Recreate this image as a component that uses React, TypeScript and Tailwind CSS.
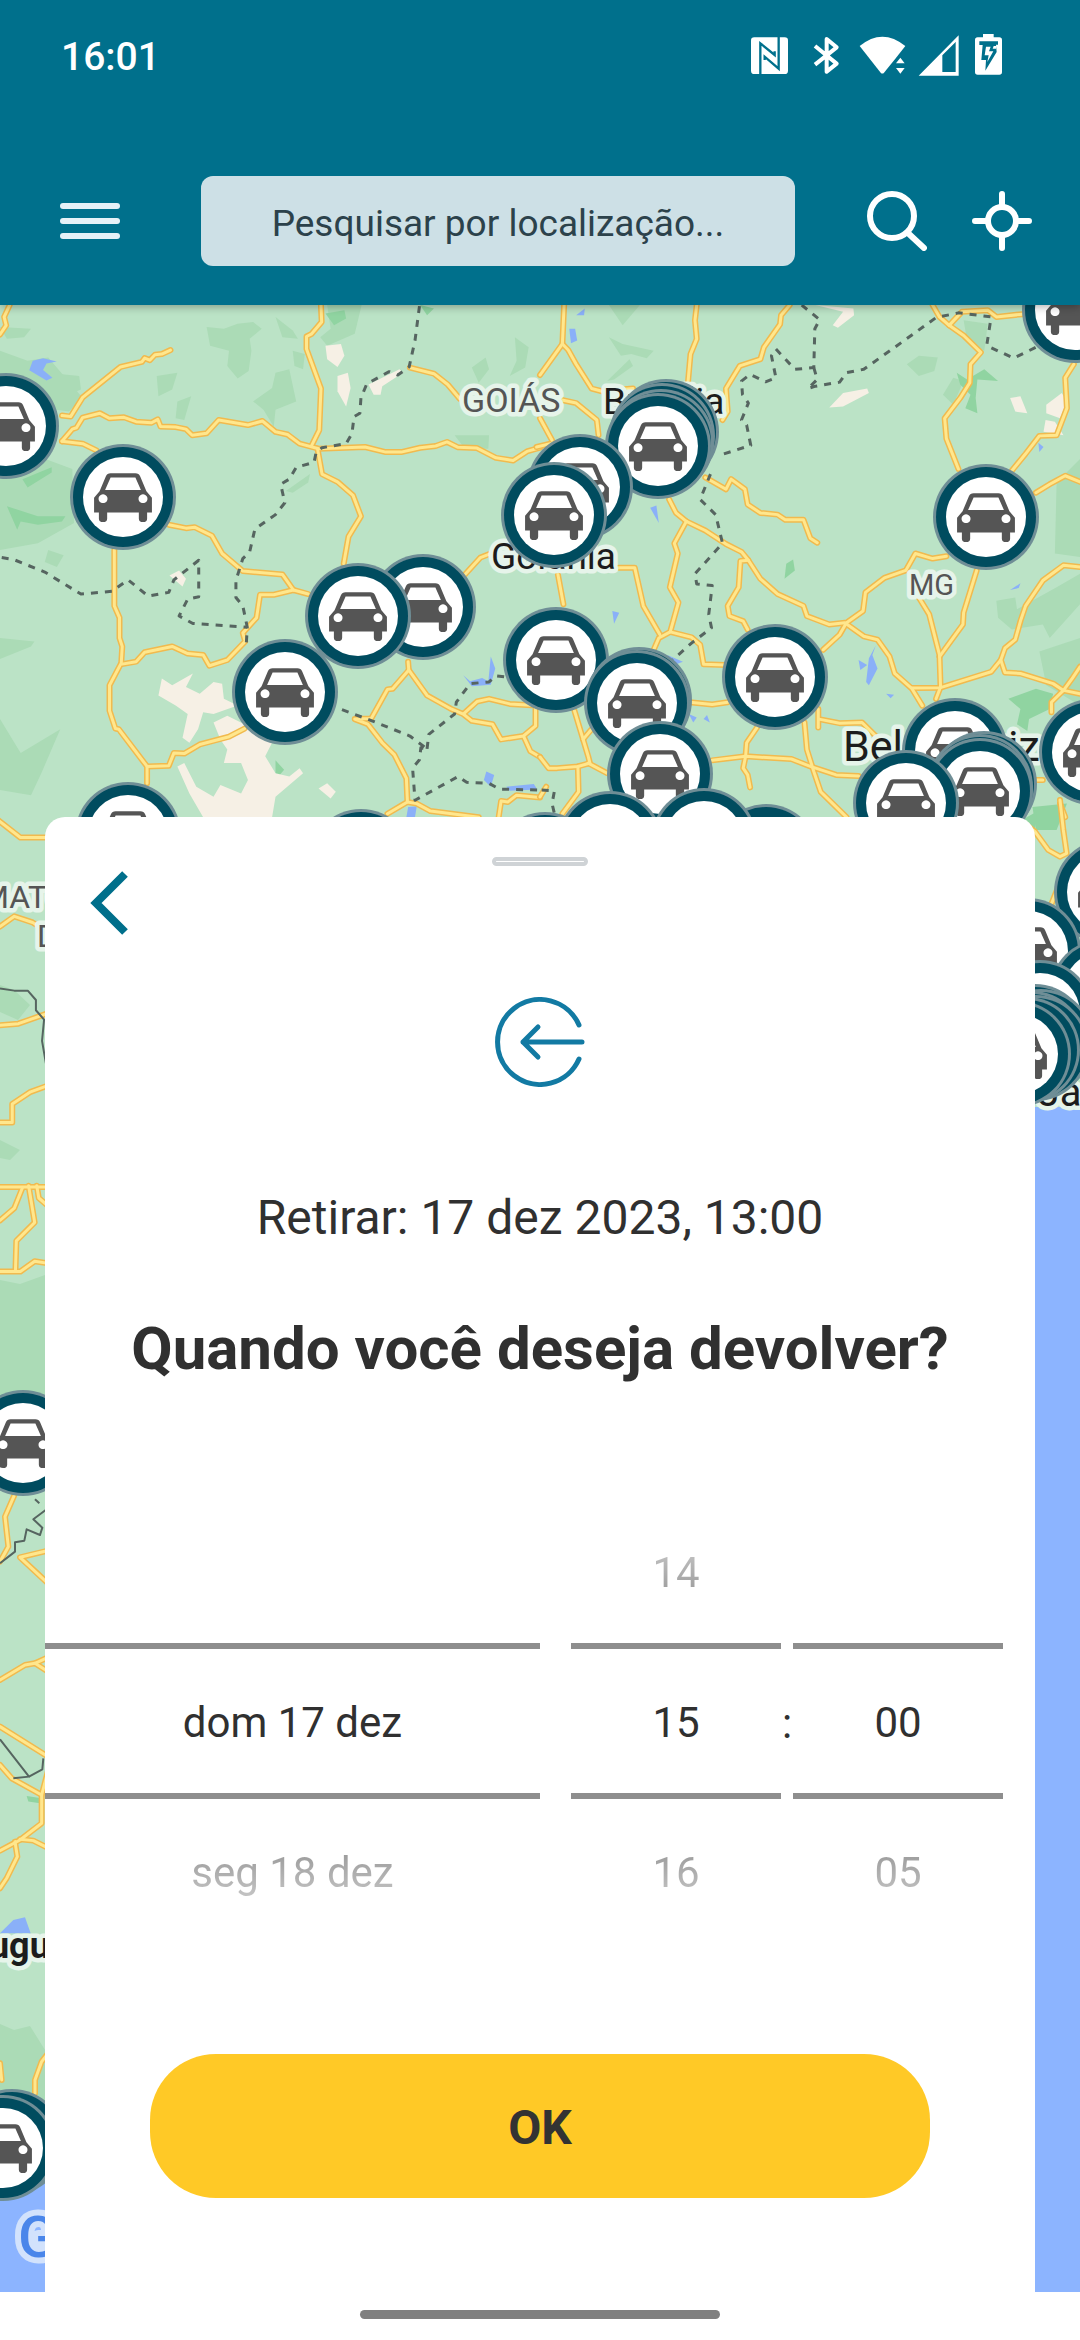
import React from "react";

type Line = string;

interface Region {
  transform: string;
  roads: Line[];
  borders: Line[];
  solid?: boolean;
}

const WEST = "translate(0 300) scale(0.3444 0.338)";
const EAST = "translate(540 300) scale(0.3444 0.338)";

/* Each region of the map keeps its own drawing scale. */
const REGIONS: Region[] = [
  {
    transform: WEST,
    roads: [
      "28,15 12,50 18,75 0,102",
      "180,342 205,345 240,288 350,198 412,183 420,172 435,178 450,162 470,160 495,148",
      "180,418 210,382 222,378 240,348 290,335 318,350 360,347 395,360 440,363 458,353 466,374 510,376 540,382 558,400 600,394 635,355 720,370 762,358 800,390 835,398 870,425 925,440 1060,435 1120,450 1165,450 1220,437 1265,432 1298,420 1330,436 1385,438 1440,467 1490,475 1530,448 1568,437",
      "180,418 240,425 280,445",
      "932,15 934,65 905,100 890,108 890,145 932,262 927,385 905,430",
      "922,440 935,515 980,538 1025,578 1048,640 1012,700 998,780",
      "490,665 540,675 565,672 615,697 645,750 705,802 820,812 852,858",
      "895,870 852,858 795,872 755,872 745,940 705,985 712,1010 660,1065 608,1082 590,1050 545,1046 500,1025 420,1042 395,1070 350,1078 318,1140 318,1215 335,1268 345,1270 427,1380 427,1430",
      "332,740 332,905 347,940 347,1000 355,1025 352,1075",
      "427,1380 490,1378 505,1340 535,1342 580,1315 665,1292 710,1268",
      "1190,200 1260,218 1300,250 1335,292",
      "1350,812 1395,762 1430,748",
      "1185,1070 1187,1095 1140,1150 1125,1152 1078,1238 1030,1240 1068,1255 1110,1310 1145,1345 1180,1415 1183,1485 1125,1520",
      "1187,1095 1240,1170 1310,1210 1345,1225 1385,1188 1420,1180 1480,1195 1555,1200 1555,1260 1520,1290 1455,1300 1430,1255 1370,1245 1345,1225",
      "1520,1290 1540,1335 1568,1352",
      "1183,1485 1210,1490 1250,1512 1390,1530",
      "1448,1530 1455,1482 1475,1485 1500,1465 1568,1472",
    ],
    borders: [
      "1218,18 1205,120 1188,198 1155,222 1130,212 1065,248 1048,290 1045,335 1028,345 1022,395 1005,425 935,437 918,450 912,480 860,495 840,530 815,545 827,600 800,635 740,678 725,745 705,765 685,830 685,880 705,905 718,968 715,1020",
      "5,762 40,768 130,805 235,870 325,862 372,828 430,876 490,865 505,828 577,770 577,878 545,885 520,935 560,957 718,968",
      "993,1212 1080,1245 1190,1290 1240,1328 1222,1325 1218,1360 1198,1385 1205,1480 1330,1410 1355,1427 1420,1430 1450,1447 1568,1450",
      "1240,1328 1245,1285 1320,1225 1325,1190 1365,1135 1420,1130 1440,1112 1465,1115",
    ],
  },
  {
    transform: EAST,
    roads: [
      "70,15 65,130 0,222",
      "65,130 82,148 105,190 150,262 180,270 270,262",
      "455,15 450,60 455,115 437,160 430,240",
      "725,15 700,45 697,72 650,140 640,175 580,195 540,262 545,330 530,355",
      "60,295 105,305 165,355 170,400",
      "0,350 35,415",
      "-10,435 30,425",
      "480,525 540,560 555,530 595,560 603,605 640,630 690,635 712,650 765,650 785,705 805,718",
      "375,590 395,630 425,655 480,682 540,722 585,745 605,770 640,825 690,870 765,905 775,935 840,960 885,955 940,995 980,1005 1015,1055 1030,1105 1080,1150 1110,1200",
      "425,655 390,720 400,750 377,850 402,895 378,982 345,1000 330,1035",
      "228,792 275,792 300,905 348,990",
      "378,982 440,998 465,1020 475,1078 540,1080",
      "605,770 582,772 577,850 545,905 550,935 590,950 603,975",
      "52,812 68,900",
      "1180,758 1140,765 1090,750 1062,800 1000,822 945,865 938,920 890,955 870,990 822,1035",
      "1100,880 1130,930 1160,1050 1163,1145 1150,1180",
      "1268,800 1230,925 1228,960 1160,1055",
      "1080,1148 1163,1147 1310,1100 1338,1065 1350,1030 1380,1005 1395,950 1410,905 1460,830 1520,785 1568,790",
      "1338,1065 1350,1102 1395,1105 1490,1135 1520,1155 1568,1165",
      "1520,1155 1545,1120 1568,1085",
      "1520,1155 1485,1190 1485,1220",
      "1140,15 1160,50 1188,75 1230,105 1280,155 1250,190 1248,245 1220,290 1175,350 1180,410 1215,500",
      "1188,75 1225,35 1300,30 1325,50 1400,42",
      "1550,190 1525,230 1530,320 1500,400 1450,402 1410,455 1370,505",
      "1440,570 1480,545 1525,520 1568,538",
      "100,1215 140,1350 145,1370 110,1380 50,1385 25,1385 0,1352",
      "140,1370 195,1400",
      "125,1300 148,1272",
      "110,1380 112,1455 65,1520",
      "0,1470 18,1440",
      "435,1190 500,1197 545,1190",
      "630,1265 600,1310 597,1350 590,1385 603,1405 610,1442",
      "500,1362 597,1350 730,1358 785,1380 860,1405 925,1408",
      "768,1250 775,1330 795,1395 815,1455 890,1530",
      "808,1210 808,1265",
      "810,1240 870,1252 935,1250 975,1290",
      "1430,1420 1460,1420",
      "1510,1490 1525,1530",
    ],
    borders: [
      "760,15 812,58 798,85 795,200 740,205 685,145 672,165 685,230 655,242 610,220 585,240 588,280 605,305 585,355 600,370 612,430 525,458",
      "795,200 805,235 778,262 800,255 870,243 890,215 940,205 1030,140 1150,52 1215,38 1310,50 1297,135 1375,172 1440,140",
      "495,515 465,590 510,635 530,720 450,810 455,840 500,845 490,930 498,970 440,1015 385,1065",
      "5,1450 42,1452 35,1490 42,1520",
    ],
  },
  {
    transform: "translate(0 800) scale(0.4082)",
    roads: [
      "-10,45 50,92 130,92",
      "0,310 35,285 80,300 120,325",
      "0,552 45,548 130,518",
      "0,790 30,790 30,745 75,715 130,695",
      "0,948 130,948",
      "55,950 35,1000 0,1030",
      "70,945 85,1035 40,1080 38,1150",
      "90,945 95,975 130,1005",
      "0,1155 50,1155 85,1130 130,1137",
    ],
    borders: ["0,462 35,467 68,467 88,490 88,515 108,538 103,590 115,660"],
    solid: true,
  },
  {
    transform: "translate(980 800) scale(0.3333)",
    roads: ["240,0 250,90 260,160 240,170 205,150 165,95 120,60", "215,310 235,260"],
    borders: [],
  },
  {
    transform: "translate(0 1380) scale(0.3333)",
    roads: [
      "42,348 15,410 25,500 0,545",
      "160,508 60,532 160,625",
      "0,900 75,855 105,850 160,825",
      "105,850 160,885",
      "0,1040 160,1140",
      "0,1155 35,1195 125,1245 125,1330 60,1380 0,1412",
      "125,1245 150,1150",
      "45,1385 52,1430 20,1495 0,1525",
      "60,1378 100,1382 160,1412",
      "0,2050 5,2100",
      "160,2000 125,2045 105,2100 105,2140",
    ],
    borders: [
      "0,550 45,515 45,487 73,482 80,448 120,465 127,443 100,418 140,388",
      "105,358 118,370",
      "0,1078 87,1190 40,1195",
      "87,1190 127,1168 130,1135",
    ],
    solid: true,
  },
];

const GREEN_WEST = [
  "600,80 650,85 690,70 735,65 760,85 725,115 730,150 722,210 690,232 660,195 665,150 610,135",
  "735,300 790,260 800,215 840,205 860,300 800,325 795,375 765,325",
  "800,50 850,90 865,115 820,110",
  "950,15 1050,15 1030,100 950,135 930,110 960,85",
  "455,225 515,215 500,265 460,285",
  "515,300 555,285 535,355 510,350",
  "180,220 230,225 235,265 200,280",
  "0,150 80,180 140,170 240,290 200,330 0,300",
  "0,530 130,470 210,500 215,660 110,720 0,740",
  "0,1000 100,1010 90,1025 0,1062",
  "0,1240 60,1340 175,1270 120,1400 90,1465 0,1450",
  "1480,225 1500,180 1495,110 1535,140 1525,200",
  "1370,200 1410,170 1420,205 1390,245",
  "1320,400 1420,400 1418,440 1350,440",
  "830,565 900,515 895,540 850,570",
  "850,150 885,160 880,205 855,195",
  "0,80 90,85 70,110 20,115",
  "140,740 185,755 165,790 130,775",
];

const GREEN_EAST = [
  "200,110 240,130 330,150 310,172 265,160 235,165",
  "195,240 260,175 270,195 215,235",
  "200,15 290,15 240,75",
  "1065,190 1100,165 1155,170 1145,210 1100,225",
  "1500,540 1568,470 1568,760 1495,750",
  "1325,890 1380,880 1385,915 1500,850 1568,810 1568,900 1480,1000 1460,960 1370,975 1330,940",
  "1230,60 1300,70 1290,150 1240,120",
  "1170,280 1200,230 1230,240 1200,310",
  "1450,1040 1568,1000 1568,1200 1470,1140",
];

interface Patch {
  at: string;
  shapes: string[];
}

const FOREST: Patch[] = [
  {
    at: WEST,
    shapes: [
      "945,40 1000,30 1005,55 970,75",
      "1220,15 1260,25 1240,45",
      "20,610 110,640 190,640 180,655 110,665 60,655 50,680",
      "65,530 150,495 150,510 80,555",
      "800,1362 825,1390 800,1420",
      "725,1430 745,1410 740,1455 720,1455",
    ],
  },
  {
    at: EAST,
    shapes: [
      "710,825 715,780 735,768 740,800",
      "1210,215 1240,235 1290,205 1330,240 1270,235 1265,290 1270,335 1235,320 1250,280 1220,250",
      "1360,1180 1440,1150 1490,1165 1480,1210 1420,1240 1415,1275 1385,1255 1395,1210",
      "1430,1500 1530,1490 1500,1568 1440,1568",
    ],
  },
  { at: "translate(980 800) scale(0.3333)", shapes: ["125,60 170,35 165,90 130,85"] },
  { at: "translate(0 1380) scale(0.3333)", shapes: ["80,1248 125,1255 120,1270 85,1265"] },
];

const SAND: Patch[] = [
  {
    at: WEST,
    shapes: [
      "470,1120 500,1140 560,1105 540,1145 580,1165 620,1130 645,1135 650,1180 690,1200 620,1225 590,1220 575,1270 550,1310 530,1295 545,1225 510,1200 460,1170",
      "620,1250 660,1230 720,1260 790,1310 770,1350 800,1400 840,1410 870,1385 880,1400 800,1470 790,1530 590,1530 550,1460 515,1380 535,1370 570,1440 620,1470 640,1435 700,1460 720,1420 700,1370 650,1370 660,1330 640,1300",
      "945,135 990,130 1000,165 980,198 950,175",
      "980,225 1010,215 1018,260 1005,315 980,270",
      "1070,250 1160,205 1170,215 1110,255 1105,280 1085,280",
      "492,815 520,800 540,825 530,848",
      "925,1445 950,1430 975,1455 960,1475",
    ],
  },
  {
    at: EAST,
    shapes: [
      "840,318 880,275 950,262 955,275 880,315",
      "800,15 910,25 912,45 865,82 850,75 880,35",
      "1365,290 1395,285 1415,335 1380,330",
      "1470,310 1515,275 1530,300 1510,350 1470,335",
      "1468,355 1495,360 1520,400 1462,390",
    ],
  },
];

const WATER: Patch[] = [
  {
    at: WEST,
    shapes: [
      "85,208 95,180 125,172 165,182 135,188 125,207 152,230 135,238",
      "1345,1110 1365,1128 1400,1118 1418,1128 1425,1055 1438,1090 1425,1138 1370,1143",
      "1412,1395 1435,1405 1425,1440 1405,1420",
      "1470,1440 1550,1432 1560,1448 1480,1452",
      "1185,1500 1210,1498 1205,1530 1180,1530",
    ],
  },
  {
    at: EAST,
    shapes: [
      "85,85 102,85 108,120 90,128",
      "105,45 130,25 128,45",
      "320,615 338,608 345,660",
      "210,920 230,925 215,958",
      "925,1065 950,1080 930,1095",
      "955,1060 975,1022 965,1050 980,1090 955,1140 947,1130",
      "1005,1165 1028,1168 1018,1178",
      "1365,858 1395,838 1390,852",
      "432,1225 455,1235 445,1250",
      "475,1240 485,1228 493,1250",
      "370,1050 415,1070 390,1080",
      "1447,422 1462,435 1450,450",
    ],
  },
  { at: "translate(0 1840) scale(0.3333)", shapes: ["0,280 40,240 75,232 92,280"] },
];

const PINS: [number, number][] = [
  [6, 426], [123, 497], [423, 607], [358, 616], [285, 692], [128, 835], [361, 862], [545, 865],
  [666, 432], [662, 436], [661, 442], [658, 446], [580, 487], [554, 515], [1075, 310], [986, 517],
  [556, 660], [639, 700], [637, 703], [775, 677], [660, 774], [766, 857], [610, 844], [704, 841],
  [955, 751], [984, 784], [980, 787], [980, 791], [906, 803], [1092, 752],
  [1107, 892], [1028, 951], [1103, 992], [1040, 1013],
  [1035, 1037], [1041, 1042], [1032, 1044], [1036, 1048], [1027, 1050], [1018, 1054],
  [23, 1443], [12, 2142], [3, 2148],
];

function Patches({ patches, className }: { patches: Patch[]; className: string }) {
  return (
    <g className={className}>
      {patches.map(({ at, shapes }) => (
        <g key={at} transform={at}>
          {shapes.map((points) => (
            <polygon key={points} points={points} />
          ))}
        </g>
      ))}
    </g>
  );
}

function CarPin({ x, y }: { x: number; y: number }) {
  return (
    <g transform={`translate(${x} ${y})`}>
      <circle r="53" fill="#6f8e96" />
      <circle r="50" fill="#004c5f" />
      <circle r="40" fill="#fff" />
      <path
        transform="scale(0.3444 0.338)"
        fill="#555"
        fillRule="evenodd"
        d="M-36-70H36Q46-70 50-61L68-17 84 2V46H70V64Q70 74 58 74 46 74 46 64V46H-46V64Q-46 74-58 74-70 74-70 64V46H-84V2L-68-17-50-61Q-46-70-36-70ZM-36-58L-52-21H52L36-58ZM-58-8a13 13 0 1 0 .1 0ZM58-8a13 13 0 1 0 .1 0Z"
      />
    </g>
  );
}

function MapCanvas() {
  return (
    <svg
      aria-label="Mapa"
      viewBox="0 305 1080 1987"
      preserveAspectRatio="xMidYMin slice"
      className="absolute inset-0 h-full w-full font-[Roboto,sans-serif]"
    >
      <rect y="305" width="1080" height="1987" fill="#bbe3c6" />
      <g fill="#abdbb6">
        <g transform={WEST}>
          {GREEN_WEST.map((p) => (
            <polygon key={p} points={p} />
          ))}
        </g>
        <g transform={EAST}>
          {GREEN_EAST.map((p) => (
            <polygon key={p} points={p} />
          ))}
        </g>
        <path d="M0 985L14 990 30 1005 18 1020 0 1012ZM0 1140L20 1150 10 1160 0 1158ZM0 1280L20 1284 45 1275V1420H0ZM0 2024L14 2030 30 2026 45 2050V2160H0Z" />
      </g>
      <Patches patches={FOREST} className="fill-[#90d4a1]" />
      <Patches patches={SAND} className="fill-[#f6f0e5]" />
      <Patches patches={WATER} className="fill-[#8ab0f8]" />
      <rect x="1000" y="1107" width="80" height="1185" fill="#8cb4ff" />
      <path d="M0 2180H80V2292H0Z" fill="#8cb4ff" />

      {REGIONS.map((r) => (
        <g key={r.transform} transform={r.transform} fill="none" strokeLinejoin="round" strokeLinecap="round">
          {r.roads.map((p) => (
            <polyline key={p} points={p} stroke="#f1ba4e" strokeWidth="6" vectorEffect="non-scaling-stroke" />
          ))}
          {r.roads.map((p) => (
            <polyline key={p} points={p} stroke="#ffe78d" strokeWidth="3" vectorEffect="non-scaling-stroke" />
          ))}
          {r.borders.map((p) => (
            <polyline
              key={p}
              points={p}
              stroke="#566560"
              strokeWidth={r.solid ? 2 : 3}
              strokeLinecap="butt"
              strokeDasharray={r.solid ? undefined : "7 7"}
              vectorEffect="non-scaling-stroke"
            />
          ))}
        </g>
      ))}

      <g stroke="#e6f4ea" strokeWidth="9" strokeLinejoin="round" className="[paint-order:stroke]">
        <g fill="#555">
          <text x="462" y="412" fontSize="34">GOIÁS</text>
          <text x="909" y="595" fontSize="29">MG</text>
          <text x="-19" y="908" fontSize="32">MATO</text>
          <text x="37" y="947" fontSize="32">DO SUL</text>
        </g>
        <g fill="#1c1c1c">
          <text x="603" y="414" fontSize="37">Brasília</text>
          <text x="491" y="569" fontSize="37">Goiânia</text>
          <text x="843" y="761" fontSize="43">Belo Horizonte</text>
          <text x="917" y="1106" fontSize="40">Rio de Janeiro</text>
          <text x="-48" y="1958" fontSize="36" fontWeight="700">Uruguai</text>
        </g>
      </g>

      {PINS.map(([x, y]) => (
        <CarPin key={`${x}-${y}`} x={x} y={y} />
      ))}
      <text
        x="18"
        y="2257"
        fontSize="58"
        fontWeight="500"
        fill="#4a86ea"
        stroke="#d2e2fc"
        strokeWidth="12"
        strokeLinejoin="round"
        className="[paint-order:stroke]"
      >
        Google
      </text>
    </svg>
  );
}

function StatusIcons() {
  return (
    <div className="flex h-[42px] text-white" aria-hidden="true">
      <svg viewBox="33 42 150 126" className="h-full w-[50px]">
        <rect x="33" y="52" width="111" height="110" rx="10" fill="currentColor" />
        <path
          d="M61 164V70L104 105V94M116 50V146L74 110V120"
          fill="none"
          stroke="#00708c"
          strokeWidth="7"
        />
      </svg>
      <svg viewBox="183 42 150 126" className="h-full w-[50px]">
        <path
          d="M225 78L290 131 260 155V57L290 82 225 134"
          fill="none"
          stroke="currentColor"
          strokeWidth="12"
          strokeLinejoin="round"
        />
      </svg>
      <svg viewBox="333 42 180 126" className="h-full w-[60px]" fill="currentColor">
        <path d="M359 78Q427 22 496 78L466 116 432 158Q427 163 422 158Z" />
        <path d="M481 113L494 130H468ZM481 161L494 144H468Z" />
      </svg>
      <svg viewBox="513 42 165 126" className="h-full w-[55px]">
        <path fillRule="evenodd" fill="currentColor" d="M656 46V167H536ZM647 66L607 106V156H647Z" />
      </svg>
      <svg viewBox="678 42 108 126" className="h-full w-9">
        <path
          fill="currentColor"
          d="M729 42H761V52H778Q786 52 786 60V156Q786 164 778 164H713Q705 164 705 156V60Q705 52 713 52H729Z"
        />
        <path d="M718 64H774V74H768L770 96 736 152 738 120H724L728 75H718Z" fill="#00708c" />
        <path d="M738 80H752L747 94H760L742 126 746 106H734Z" fill="currentColor" />
        <path d="M761 78L758 86H768L770 78Z" fill="currentColor" />
      </svg>
    </div>
  );
}

function Header() {
  return (
    <header className="relative z-10 bg-[#00708c] pb-[39px] shadow-[0_2px_8px_rgba(0,0,0,0.3)]">
      <div className="flex h-44 items-start justify-between pt-[34px] pr-[78px] pl-[61px]">
        <span className="text-[39px] leading-[46px] font-medium text-white">16:01</span>
        <StatusIcons />
      </div>
      <div className="flex items-center pr-[48px] pl-[60px]">
        <button type="button" aria-label="Menu" className="flex w-[60px] shrink-0 flex-col gap-[9px]">
          <span className="h-[6px] rounded-full bg-[#e6f1f7]" />
          <span className="h-[6px] rounded-full bg-[#e6f1f7]" />
          <span className="h-[6px] rounded-full bg-[#e6f1f7]" />
        </button>
        <input
          type="text"
          aria-label="Pesquisar por localização"
          placeholder="Pesquisar por localização..."
          className="mr-[72px] ml-[81px] h-[90px] min-w-0 flex-1 rounded-xl bg-[#cde0e6] pt-1 text-center text-[37px] text-[#2c424b] outline-none placeholder:text-[#2c424b]"
        />
        <button type="button" aria-label="Buscar" className="mr-[45px] shrink-0 text-white">
          <svg viewBox="0 0 60 60" className="h-[60px] w-[60px]" fill="none" stroke="currentColor" strokeWidth="6">
            <circle cx="25" cy="25" r="22" />
            <path d="M42 43L57 57" strokeLinecap="round" />
          </svg>
        </button>
        <button type="button" aria-label="Minha localização" className="shrink-0 text-white">
          <svg
            viewBox="0 0 60 60"
            className="h-[60px] w-[60px]"
            fill="none"
            stroke="currentColor"
            strokeWidth="6"
            strokeLinecap="round"
          >
            <circle cx="30" cy="30" r="14" />
            <path d="M30 3V15M30 45V57M3 30H15M45 30H57" />
          </svg>
        </button>
      </div>
    </header>
  );
}

function Wheel({
  label,
  previous,
  current,
  next,
  className,
}: {
  label: string;
  previous?: string;
  current: string;
  next: string;
  className: string;
}) {
  return (
    <div role="group" aria-label={label} className={`flex flex-col text-[42px] leading-[48px] ${className}`}>
      <div className="flex h-36 items-center justify-center pt-1">
        {previous && (
          <button type="button" className="bg-linear-to-b from-[#c4c4c4] to-[#999] bg-clip-text text-transparent">
            {previous}
          </button>
        )}
      </div>
      <div className="flex h-[156px] items-center justify-center border-y-6 border-[#8e8e8e] pt-1 text-[#303030]">
        {current}
      </div>
      <div className="flex h-36 items-center justify-center pt-1">
        <button type="button" className="bg-linear-to-b from-[#999] to-[#c4c4c4] bg-clip-text text-transparent">
          {next}
        </button>
      </div>
    </div>
  );
}

function ReturnSheet() {
  return (
    <section className="relative mx-[45px] mt-[512px] flex flex-col rounded-t-[20px] bg-white pt-10 pb-[94px]">
      <div className="h-[9px] w-24 self-center rounded-full border-4 border-[#cfd3d6]" />
      <button type="button" aria-label="Voltar" className="mt-1 ml-[45px] self-start text-[#006f8b]">
        <svg viewBox="0 0 39 66" className="h-[66px] w-[39px]" fill="none" stroke="currentColor" strokeWidth="8">
          <path d="M35 4L6 33 35 62" />
        </svg>
      </button>
      <svg
        viewBox="0 0 90 90"
        className="mt-[61px] h-[90px] w-[90px] self-center"
        fill="none"
        stroke="#127aa3"
        strokeWidth="5"
        strokeLinecap="round"
        strokeLinejoin="round"
      >
        <path d="M84 28A42.500 42.500 0 1 0 84 62" />
        <path d="M87 45H28M43 30L28 45 43 60" />
      </svg>
      <p className="mt-[103px] text-center text-[48px] leading-[56px] text-[#303030]">
        Retirar: 17 dez 2023, 13:00
      </p>
      <h1 className="mt-[69px] text-center text-[60px] leading-[68px] font-bold text-[#303030]">
        Quando você deseja devolver?
      </h1>
      <div className="mt-[116px] flex pr-8">
        <Wheel label="Data" current="dom 17 dez" next="seg 18 dez" className="mr-[31px] flex-[495]" />
        <Wheel label="Hora" previous="14" current="15" next="16" className="flex-[210]" />
        <span className="flex w-3 items-center justify-center pt-1 text-[42px] text-[#303030]">:</span>
        <Wheel label="Minutos" current="00" next="05" className="flex-[210]" />
      </div>
      <button
        type="button"
        className="mx-[105px] mt-[111px] h-36 rounded-[66px] bg-[#ffc926] pt-1 text-[48px] font-bold text-[#333]"
      >
        OK
      </button>
    </section>
  );
}

export default function App() {
  return (
    <div className="flex min-h-screen flex-col bg-white font-[Roboto,sans-serif]">
      <Header />
      <main className="relative flex-1 overflow-hidden">
        <MapCanvas />
        <ReturnSheet />
      </main>
      <footer className="flex h-12 justify-center pt-[18px]">
        <div className="h-[9px] w-1/3 rounded-full bg-[#808080]" />
      </footer>
    </div>
  );
}
